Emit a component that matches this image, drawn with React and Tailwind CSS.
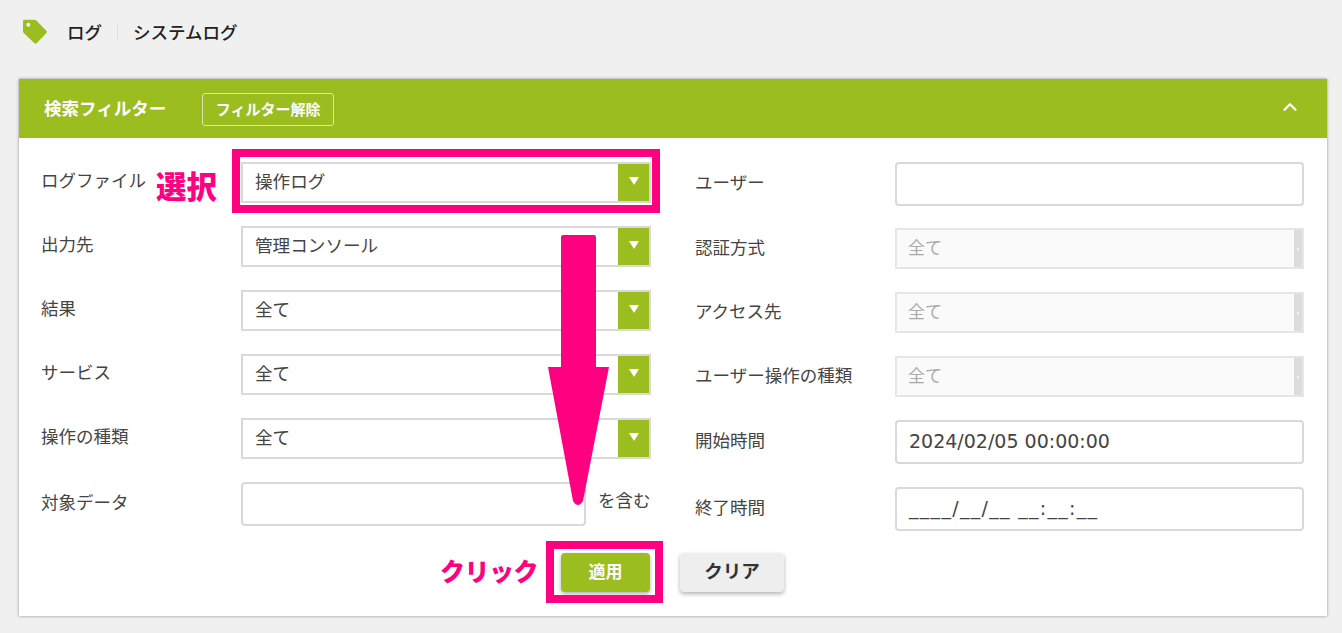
import React from 'react';
import { ChevronUp } from 'lucide-react';

const font = "font-['Noto_Sans_CJK_JP','Noto_Sans',sans-serif]";

const Label = ({ children, className = '' }) => (
  <div className={`text-[17.5px] leading-6 text-[#444] ${className}`}>{children}</div>
);

const Select = ({ value }) => (
  <div className="flex h-[41px] w-[410px] items-stretch border-2 border-[#d9d9d9] bg-white">
    <div className="flex-1 pl-3 text-[17.6px] leading-[34px] text-[#444]">{value}</div>
    <div className="flex w-[31px] items-center justify-center bg-[#9bbd1f]">
      <span className="h-0 w-0 -translate-y-px border-x-[5px] border-t-[8px] border-x-transparent border-t-white" />
    </div>
  </div>
);

const DisabledSelect = ({ value }) => (
  <div className="flex h-[41px] w-[409px] items-stretch border-2 border-[#e6e6e6] bg-[#fafafa]">
    <div className="flex-1 pl-[11px] text-[17px] leading-[33px] text-[#aaa]">{value}</div>
    <div className="flex w-2 items-center justify-center bg-[#dcdcdc]">
      <span className="h-0.5 w-0.5 bg-[#f5f5f5]" />
    </div>
  </div>
);

const Input = ({ value = '', className = '' }) => (
  <div className={`h-[44px] rounded-[4px] border-2 border-[#d9d9d9] bg-white pl-3 font-['DejaVu_Sans',sans-serif] text-[19px] leading-[38px] text-[#444] ${className}`}>
    {value}
  </div>
);

const Row = ({ label, labelClass = 'w-[200px] -translate-y-[2px]', height, children }) => (
  <div className="flex items-center" style={{ height }}>
    <Label className={labelClass}>{label}</Label>
    {children}
  </div>
);

const rightLabel = 'w-[200px] -translate-y-[2px]';

const App = () => {
  return (
    <div className={`relative h-[633px] w-[1342px] overflow-hidden bg-[#f0f0f0] ${font}`}>
      {/* breadcrumb */}
      <div className="flex h-[64px] items-center pl-[22px]">
        <svg width="26" height="26" viewBox="0 0 26 26">
          <path d="M1 2.5C1 1.4 1.6 .8 2.7 .8L12.5 .8C13.3 .8 14 1.1 14.6 1.7L24.2 11.5C25 12.3 25 13.4 24.2 14.2L14.9 23.9C14.1 24.7 13 24.7 12.2 23.9L2 14.2C1.3 13.6 1 12.9 1 12Z" fill="#9bbd1f" />
          <circle cx="6.3" cy="5.8" r="2" fill="#f0f0f0" />
        </svg>
        <span className="ml-[19px] text-[17.5px] font-medium text-[#222]">ログ</span>
        <span className="mx-[15px] h-4 w-px bg-[#dedede]" />
        <span className="text-[17.5px] font-medium text-[#222]">システムログ</span>
      </div>

      {/* panel */}
      <div className="ml-[19px] mt-[15px] h-[537px] w-[1308px] bg-white shadow-[0_0_3px_rgba(0,0,0,0.4)]">
        <div className="flex h-[59px] items-center bg-[#9bbd1f] pl-[25px] pr-[27px] text-white">
          <span className="text-[17.5px] font-bold">検索フィルター</span>
          <span className="ml-[36px] flex h-[33px] w-[132px] translate-y-px items-center justify-center rounded-[3px] border border-[#dbe6a8] text-[15px] font-bold">
            フィルター解除
          </span>
          <ChevronUp className="ml-auto -translate-y-0.5 translate-x-px" size={22} strokeWidth={2.5} />
        </div>

        <div className="flex pl-[22px] pt-[24px]">
          <div className="flex w-[654px] flex-col gap-[24px]">
            <Row label="ログファイル" height={40}><Select value="操作ログ" /></Row>
            <Row label="出力先" height={40}><Select value="管理コンソール" /></Row>
            <Row label="結果" height={40}><Select value="全て" /></Row>
            <Row label="サービス" height={40}><Select value="全て" /></Row>
            <Row label="操作の種類" height={40}><Select value="全て" /></Row>
            <Row label="対象データ" height={44}>
              <Input className="w-[345px]" />
              <Label className="ml-3 -translate-y-1">を含む</Label>
            </Row>
          </div>

          <div className="flex flex-col">
            <Row label="ユーザー" labelClass={rightLabel} height={44}><Input className="w-[409px]" /></Row>
            <div className="mt-[22px] flex flex-col gap-[23px]">
              <Row label="認証方式" labelClass={rightLabel} height={41}><DisabledSelect value="全て" /></Row>
              <Row label="アクセス先" labelClass={rightLabel} height={41}><DisabledSelect value="全て" /></Row>
              <Row label="ユーザー操作の種類" labelClass={rightLabel} height={41}><DisabledSelect value="全て" /></Row>
              <Row label="開始時間" labelClass={rightLabel} height={44}>
                <Input className="w-[409px]" value="2024/02/05 00:00:00" />
              </Row>
            </div>
            <div className="mt-[23px]">
              <Row label="終了時間" labelClass={rightLabel} height={44}>
                <Input className="w-[409px] tracking-[1.3px]" value="____/__/__ __:__:__" />
              </Row>
            </div>
          </div>
        </div>

        <div className="ml-[542px] mt-[22px] flex gap-[30px]">
          <button className="h-[39px] w-[89px] rounded-[4px] bg-[#9bbd1f] pb-1 text-[17px] font-bold text-white shadow-[0_2px_4px_rgba(0,0,0,0.3)]">
            適用
          </button>
          <button className="h-[39px] w-[104px] rounded-[4px] bg-[#eeeeee] pb-1 text-[18.5px] font-bold text-[#333] shadow-[0_2px_4px_rgba(0,0,0,0.3)]">
            クリア
          </button>
        </div>
      </div>

      {/* annotations */}
      <div className="absolute left-[232px] top-[149px] h-[64px] w-[428px] border-[8px] border-[#ff0080]" />
      <div className="absolute left-[546px] top-[541px] h-[62px] w-[117px] border-[8px] border-[#ff0080]" />
      <div className="absolute left-[156px] top-[165px] text-[30.5px] font-black leading-10 text-[#ff0080]">選択</div>
      <div className="absolute left-[440px] top-[550px] text-[25px] font-black leading-10 tracking-[-0.5px] text-[#ff0080]">クリック</div>
      <svg className="absolute left-[548px] top-[235px]" width="62" height="272" viewBox="0 0 62 272">
        <path d="M13 2Q13 0 15 0H46Q48 0 48 2V132H61L35 266Q30 274 25 266L0 132H13Z" fill="#ff0080" />
      </svg>
    </div>
  );
};

export default App;
